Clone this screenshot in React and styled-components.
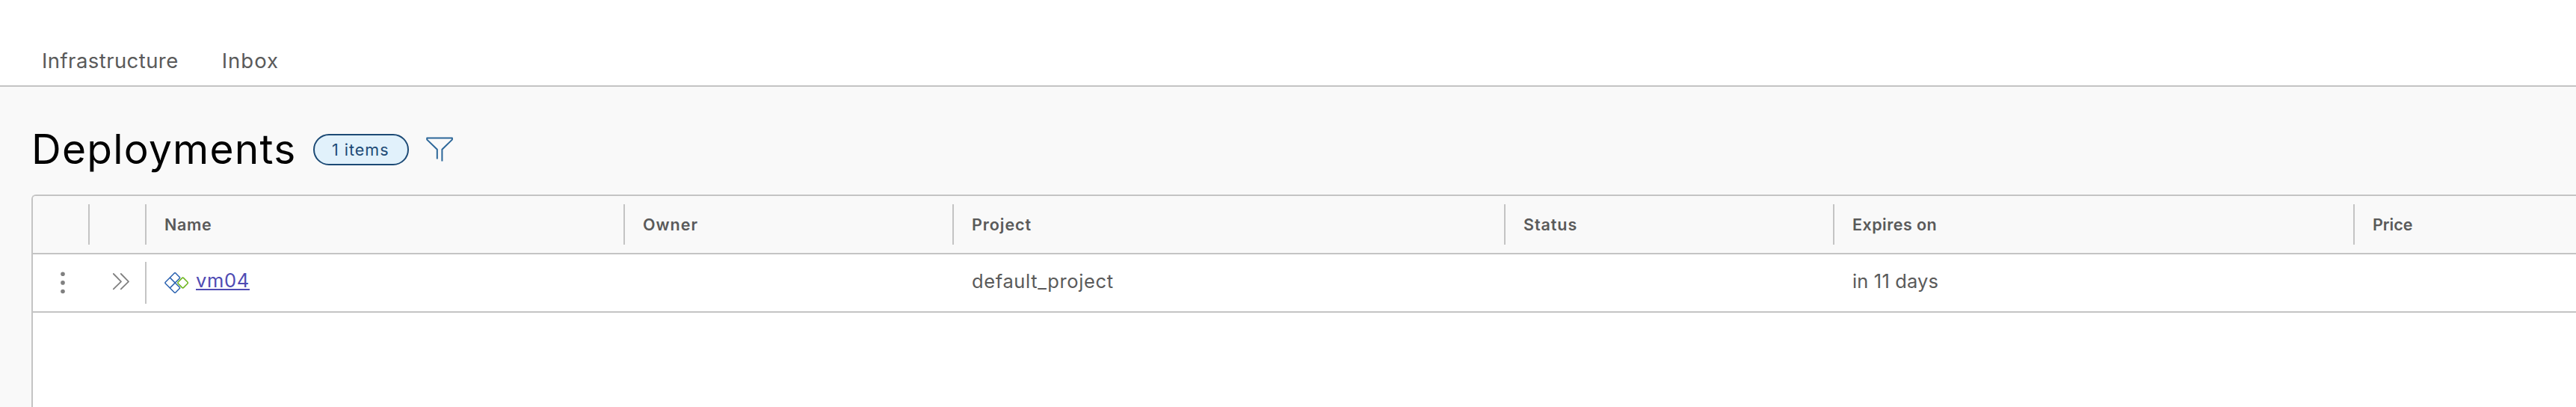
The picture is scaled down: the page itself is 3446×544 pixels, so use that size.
import React from "react";
import styled, { createGlobalStyle } from "styled-components";

const line = "#c4c4c4";
const surface = "#f9f9f9";

const GlobalStyle = createGlobalStyle`
  *, *::before, *::after { box-sizing: border-box; }
  body {
    margin: 0;
    background: ${surface};
    font-family: Inter, "Open Sans", sans-serif;
    color: #5a5a5a;
  }
`;

const Page = styled.div`
  display: flex;
  flex-direction: column;
  height: 544px;
  overflow: hidden;
  background: ${surface};
`;

const NavBar = styled.nav`
  display: flex;
  align-items: center;
  gap: 58px;
  flex: none;
  height: 116px;
  padding: 47px 56px 0;
  background: #fff;
  border-bottom: 2px solid ${line};
`;

const NavLink = styled.a`
  font-size: 27.5px;
  line-height: 36px;
  letter-spacing: ${(p) => p.$tracking};
`;

const Heading = styled.header`
  display: flex;
  align-items: center;
  flex: none;
  height: 144px;
  padding: 24px 42px 0;
`;

const Title = styled.h1`
  width: 355px;
  margin: 0 22px 0 0;
  padding-bottom: 3px;
  font-size: 55px;
  font-weight: 400;
  line-height: 64px;
  letter-spacing: 1.25px;
  color: #000;
`;

const CountBadge = styled.span`
  display: flex;
  align-items: center;
  width: 128px;
  height: 42px;
  margin-right: 23px;
  padding-left: 23px;
  border: 2px solid #1c4a75;
  border-radius: 21px;
  background: #e1f1fb;
  color: #1c4a75;
  font-size: 21.5px;
  letter-spacing: 1px;
  white-space: nowrap;
`;

const FilterButton = styled.button`
  display: flex;
  padding: 0;
  border: 0;
  background: none;
  color: #2c6799;
`;

const Grid = styled.section`
  flex: 1;
  margin-left: 42px;
  border: solid ${line};
  border-width: 2px 0 0 2px;
  border-top-left-radius: 6px;
  background: #fff;
  overflow: hidden;
`;

const Row = styled.div`
  display: grid;
  grid-template-columns: 76px 76px 640px 440px 738px 440px 696px 1fr;
  height: 78px;
  border-bottom: 2px solid ${line};
  background: ${(p) => (p.$head ? surface : "#fff")};
`;

const HeadCell = styled.div`
  display: flex;
  align-items: center;
  margin: 11px 0;
  padding: 0 0 1px 24px;
  border-right: 2px solid ${line};
  font-size: 21.5px;
  font-weight: 600;
  letter-spacing: ${(p) => p.$tracking || "normal"};
  &:last-child { border-right: 0; }
`;

const Cell = styled.div`
  display: flex;
  align-items: center;
  margin: 10px 0;
  padding: 0 0 6px 24px;
  border-right: 2px solid ${(p) => (p.$divided ? line : "transparent")};
  font-size: 25.5px;
  letter-spacing: ${(p) => p.$tracking || "normal"};
`;

const IconCell = styled(Cell)`
  padding: ${(p) => p.$inset};
  color: #808080;
`;

const NameLink = styled.a`
  margin-left: 10px;
  color: #4f4bb3;
  line-height: 26px;
  letter-spacing: 0.68px;
  text-decoration: underline;
  text-decoration-thickness: 2px;
  text-underline-offset: 2px;
  text-decoration-skip-ink: none;
`;

const TypeIcon = styled.svg`
  flex: none;
  margin-top: 6px;
`;

const FilterIcon = () => (
  <svg width="36" height="34" viewBox="0 0 36 34" fill="none" stroke="currentColor" strokeWidth="2" strokeLinejoin="round">
    <path d="M14.8 29.5V16.8L1.2 3.6V1.6H34.9V3.6L21.4 16.8V32.5" />
  </svg>
);

const KebabIcon = () => (
  <svg width="6" height="30" viewBox="0 0 6 30" fill="currentColor">
    <circle cx="3" cy="3.3" r="2.8" />
    <circle cx="3" cy="14.9" r="2.8" />
    <circle cx="3" cy="26.5" r="2.8" />
  </svg>
);

const ExpandIcon = () => (
  <svg width="24" height="24" viewBox="0 0 24 24" fill="none" stroke="currentColor" strokeWidth="1.8" strokeLinecap="round" strokeLinejoin="round">
    <path d="M1.8 2L12 12.3L1.8 22.4M11.8 2L22 12.3L11.8 22.4" />
  </svg>
);

const DeploymentIcon = () => (
  <TypeIcon width="32" height="28" viewBox="0 0 32 28" fill="none" strokeWidth="1.5" strokeLinejoin="round">
    <g stroke="#2b62b0">
      <path d="M21 7.2L15.1 1.2Q14.1 .2 13.1 1.2L1.4 13Q.4 14 1.4 15L13.1 26.8Q14.1 27.8 15.1 26.8L21 20.8" />
      <path d="M7.3 7.1L21 20.8M7.3 20.9L21 7.2" />
    </g>
    <path stroke="#6cb51d" d="M23.6 7.6Q24.6 6.6 25.6 7.6L30.9 13Q31.9 14 30.9 15L25.6 20.4Q24.6 21.4 23.6 20.4L18.3 15Q17.3 14 18.3 13Z" />
  </TypeIcon>
);

const columns = [
  { label: "" },
  { label: "" },
  { label: "Name", tracking: "0.67px" },
  { label: "Owner", tracking: "1px" },
  { label: "Project", tracking: "0.95px" },
  { label: "Status", tracking: "0.94px" },
  { label: "Expires on", tracking: "0.47px" },
  { label: "Price" },
];

export default function App() {
  return (
    <>
      <GlobalStyle />
      <Page>
        <NavBar>
          <NavLink $tracking="0.43px">Infrastructure</NavLink>
          <NavLink $tracking="1px">Inbox</NavLink>
        </NavBar>
        <Heading>
          <Title>Deployments</Title>
          <CountBadge>1 items</CountBadge>
          <FilterButton aria-label="Filter">
            <FilterIcon />
          </FilterButton>
        </Heading>
        <Grid>
          <Row $head>
            {columns.map((c, i) => (
              <HeadCell key={i} $tracking={c.tracking}>{c.label}</HeadCell>
            ))}
          </Row>
          <Row>
            <IconCell $inset="0 0 0 37px"><KebabIcon /></IconCell>
            <IconCell $divided $inset="0 0 4px 30px"><ExpandIcon /></IconCell>
            <Cell>
              <DeploymentIcon />
              <NameLink href="#">vm04</NameLink>
            </Cell>
            <Cell />
            <Cell $tracking="0.62px">default_project</Cell>
            <Cell />
            <Cell $tracking="0.15px">in 11 days</Cell>
            <Cell />
          </Row>
        </Grid>
      </Page>
    </>
  );
}
